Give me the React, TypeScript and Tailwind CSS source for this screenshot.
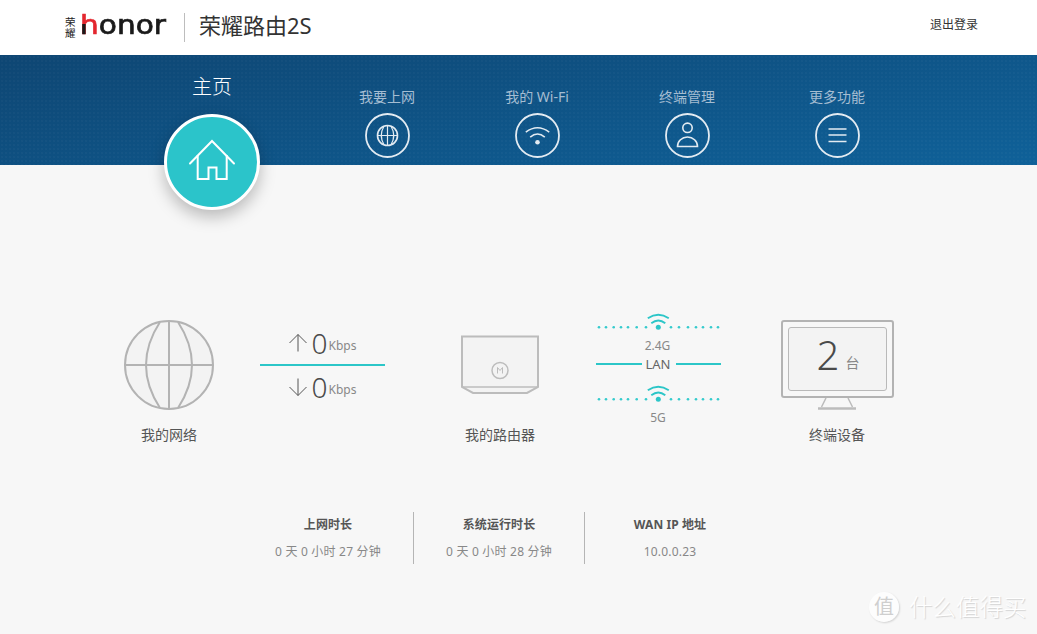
import React from 'react';

const NavCircle = ({ children }: { children: React.ReactNode }) => (
  <svg width="45" height="45" viewBox="0 0 45 45" fill="none" stroke="#e3ebf2" strokeWidth="1.6">
    <circle cx="22.5" cy="22.5" r="21.5" strokeWidth="1.8" />
    {children}
  </svg>
);

const navItems: { label: string; icon: React.ReactNode }[] = [
  {
    label: '我要上网',
    icon: (
      <>
        <circle cx="22.5" cy="22.5" r="10" />
        <path d="M12.5 22.5h20M22.5 12.5v20" strokeWidth="1.2" />
        <path d="M19 13.2Q13.5 22.5 19 31.8M26 13.2Q31.5 22.5 26 31.8" strokeWidth="1.2" />
      </>
    ),
  },
  {
    label: '我的 Wi-Fi',
    icon: (
      <>
        <path d="M10.8 19.2Q22.5 10.4 34.2 19.2" />
        <path d="M15.2 24.2Q22.5 17.8 29.8 24.2" />
        <circle cx="22.5" cy="29.2" r="2.3" fill="#e3ebf2" stroke="none" />
      </>
    ),
  },
  {
    label: '终端管理',
    icon: (
      <>
        <circle cx="22.5" cy="14.8" r="4.7" />
        <path d="M12.5 33.5a10 9.5 0 0 1 20 0z" />
      </>
    ),
  },
  {
    label: '更多功能',
    icon: <path d="M13.5 16h18M13.5 22h18M13.5 28.5h18" strokeWidth="1.7" />,
  },
];

const WifiBand = () => {
  const dots = [3, 10, 17.7, 25, 32, 40.7, 50, 75, 83, 92, 100, 107, 115, 122];
  return (
    <svg width="125" height="17" viewBox="0 0 125 17" fill="none" stroke="#2cc6c8" strokeWidth="1.8">
      {dots.map((x) => (
        <circle key={x} cx={x} cy="14.3" r="1.3" fill="#35cbcd" stroke="none" />
      ))}
      <circle cx="62.3" cy="14.3" r="2.5" fill="#2cc6c8" stroke="none" />
      <path d="M51.8 5.3Q62.3 -1.8 72.8 5.3" />
      <path d="M55.3 10.3Q62.3 4.8 69.3 10.3" />
    </svg>
  );
};

const RateRow = ({ arrow }: { arrow: string }) => (
  <div className="h-[42px] flex items-center">
    <svg width="18" height="18" viewBox="0 0 18 18" fill="none" stroke="#555" strokeWidth="1">
      <path d={arrow} />
    </svg>
    <span className="ml-[5px] text-[28px] leading-[36px] font-light text-[#4a4a4a]">0</span>
    <span className="ml-[1px] mt-[6px] text-[12px] leading-[18px] text-[#888]">Kbps</span>
  </div>
);

const Stat = ({ title, value, border }: { title: string; value: string; border?: boolean }) => (
  <div className={border ? 'w-[171px] h-[52px] border-r border-[#b5b5b5] flex flex-col items-center pt-[4px]' : 'w-[170px] h-[52px] flex flex-col items-center pt-[4px]'}>
    <div className="text-[12px] leading-[18px] font-bold text-[#555] tracking-[0.1px]">{title}</div>
    <div className="mt-[9px] text-[12px] leading-[18px] text-[#888] tracking-[0.2px]">{value}</div>
  </div>
);

const App = () => {
  return (
    <div className="h-[634px] w-[1037px] overflow-hidden relative bg-[#f7f7f7] font-['Noto_Sans','Noto_Sans_CJK_SC',sans-serif]">
      {/* Header */}
      <div className="h-[55px] bg-white flex items-center pl-[65px] pr-[59px] pb-[5px]">
        <div className="w-[11px] text-[10.5px] leading-[11px] text-[#222] font-['Noto_Sans_CJK_SC',sans-serif] mt-[3px]">
          荣耀
        </div>
        <div className="ml-[4px] w-[88px] origin-left scale-x-[1.14] text-[26px] leading-[30px] font-['DejaVu_Sans',sans-serif] text-[#1a1a1a] [-webkit-text-stroke:0.7px_#1a1a1a]">
          <span className="bg-[linear-gradient(#1a1a1a,#1a1a1a),linear-gradient(#e3262e,#e3262e)] bg-no-repeat bg-[size:34%_38%,100%_100%] bg-[position:0_76%,0_0] bg-clip-text text-transparent [-webkit-text-stroke:0.7px_transparent]">h</span>onor
        </div>
        <div className="w-px h-[29px] bg-[#bdbdbd] ml-[16px] mt-[5px]" />
        <div className="ml-[14px] text-[22px] leading-[30px] text-[#333]">荣耀路由2S</div>
        <div className="ml-auto text-[12px] text-[#333]">退出登录</div>
      </div>

      {/* Nav band */}
      <div className="h-[110px] flex pl-[137px] bg-[image:radial-gradient(rgba(255,255,255,0.025)_1px,transparent_1px),linear-gradient(170deg,#0e4673,#0f6199)] bg-[size:4px_4px,100%_100%]">
        <div className="w-[150px] flex flex-col items-center relative z-10">
          <div className="text-[20px] leading-[28px] text-white mt-[18px] font-light">主页</div>
          <div className="mt-[13px] w-[96px] h-[96px] rounded-full bg-[#2bc4ca] border-[3px] border-white shadow-[0_7px_16px_rgba(0,0,0,0.25)] shrink-0">
            <svg width="90" height="90" viewBox="3 3 90 90" fill="none" stroke="#fff" strokeWidth="2" strokeLinecap="round">
              <path d="M26 49.5L48 27L70 49.5" />
              <path d="M33.7 41V65H44.5V53.5H52.5V65H62.7V41" strokeLinecap="butt" />
            </svg>
          </div>
        </div>
        <div className="flex ml-[25px]">
          {navItems.map((item) => (
            <div key={item.label} className="w-[150px] flex flex-col items-center">
              <div className="text-[14px] leading-[18px] text-[#a5bdd2] mt-[33px] mb-[7px]">{item.label}</div>
              <NavCircle>{item.icon}</NavCircle>
            </div>
          ))}
        </div>
      </div>

      {/* Status row */}
      <div className="flex pl-[109px] pt-[155px]">
        <div className="w-[120px] flex flex-col items-center">
          <svg width="90" height="90" viewBox="0 0 90 90" fill="#f3f3f3" stroke="#b3b3b3" strokeWidth="2">
            <circle cx="45" cy="45" r="44" />
            <path d="M36 2Q8 45 36 88M54 2Q82 45 54 88" fill="none" />
            <path d="M1 45H89M45 1V89" fill="none" />
          </svg>
          <div className="mt-[15px] text-[14px] leading-[20px] text-[#555]">我的网络</div>
        </div>

        <div className="ml-[31px] w-[125px] h-[90px] flex flex-col items-center justify-center">
          <RateRow arrow="M9 17.5V0.5M0.5 9L9 0.5L17.5 9" />
          <div className="h-[2px] w-full bg-[#2cc6c8] shrink-0" />
          <RateRow arrow="M9 0.5V17.5M0.5 9L9 17.5L17.5 9" />
        </div>

        <div className="ml-[55px] w-[120px] flex flex-col items-center">
          <div className="h-[90px] flex items-center">
            <svg width="80" height="60" viewBox="0 0 80 60" fill="#f3f3f3" stroke="#bcbcbc" strokeWidth="2">
              <path d="M2 1.5H78V52L67 58H13L2 52Z" />
              <path d="M2 52H78" strokeWidth="1.5" />
              <circle cx="40" cy="35.5" r="8" fill="none" strokeWidth="1.5" />
              <path d="M37.5 38.5V32.5L40 35.5L42.5 32.5V38.5" fill="none" strokeWidth="1" />
            </svg>
          </div>
          <div className="mt-[15px] text-[14px] leading-[20px] text-[#555]">我的路由器</div>
        </div>

        <div className="ml-[36px] w-[125px] -mt-[7px] flex flex-col items-center text-[12px] leading-[16px] text-[#888]">
          <WifiBand />
          <div className="mt-[8px] -ml-[2px]">2.4G</div>
          <div className="mt-[2px] w-full flex items-center">
            <div className="h-[2px] flex-1 bg-[#2cc6c8]" />
            <span className="px-[5px] text-[13px] text-[#666] -ml-[1px]">LAN</span>
            <div className="h-[2px] flex-1 bg-[#2cc6c8]" />
          </div>
          <div className="mt-[13px]">
            <WifiBand />
          </div>
          <div className="mt-[8px] -ml-[1px]">5G</div>
        </div>

        <div className="ml-[56px] w-[120px] flex flex-col items-center">
          <div className="w-[113px] h-[78px] border-2 border-[#b3b3b3] rounded-[3px] p-[5px] shrink-0">
            <div className="h-full border border-[#b9b9b9] rounded-[3px] bg-[#f3f3f3] flex items-end justify-center pb-[11px] pl-[2px]">
              <span className="text-[40px] leading-[48px] font-light text-[#4a4a4a]">2</span>
              <span className="ml-[6px] mb-[7px] text-[14px] leading-[18px] text-[#888]">台</span>
            </div>
          </div>
          <svg width="40" height="12" viewBox="0 0 40 12" fill="none" stroke="#bcbcbc">
            <path d="M9 0L4.5 9M31 0L35.5 9" strokeWidth="1.5" />
            <path d="M1 10.5H39" strokeWidth="2.5" />
          </svg>
          <div className="mt-[15px] text-[14px] leading-[20px] text-[#555]">终端设备</div>
        </div>
      </div>

      {/* Stats */}
      <div className="flex pl-[243px] mt-[67px]">
        <Stat title="上网时长" value="0 天 0 小时 27 分钟" border />
        <Stat title="系统运行时长" value="0 天 0 小时 28 分钟" border />
        <Stat title="WAN IP 地址" value="10.0.0.23" />
      </div>

      {/* Watermark */}
      <div className="absolute left-[869px] top-[592px] flex items-center">
        <div className="w-[30px] h-[30px] rounded-full bg-white/70 shadow-[1px_1px_2px_rgba(0,0,0,0.15)] flex items-center justify-center text-[20px] leading-none text-[#cfcfcf]">
          值
        </div>
        <div className="ml-[10px] text-[23.5px] leading-[30px] font-light text-white [text-shadow:1px_1px_1px_rgba(0,0,0,0.15)]">
          什么值得买
        </div>
      </div>
    </div>
  );
};

export default App;
